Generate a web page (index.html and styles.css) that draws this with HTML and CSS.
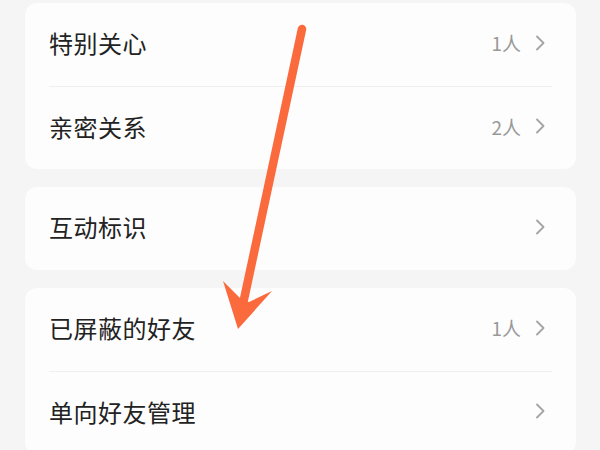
FILE: index.html
```html
<!DOCTYPE html>
<html lang="zh-CN">
<head>
  <meta charset="UTF-8" />
  <meta name="viewport" content="width=device-width, initial-scale=1.0"/>
  <title>好友设置</title>
  <link rel="stylesheet" href="styles.css">
</head>
<body>

<main class="settings">
  <section class="card">
    <div class="row">
      <span class="label">特别关心</span>
      <span class="extra"><span class="count">1人</span><svg class="chev" width="9" height="16" viewBox="0 0 9 16"><polyline points="1,1.5 7.5,8 1,14.5"/></svg></span>
    </div>
    <div class="row">
      <span class="label">亲密关系</span>
      <span class="extra"><span class="count">2人</span><svg class="chev" width="9" height="16" viewBox="0 0 9 16"><polyline points="1,1.5 7.5,8 1,14.5"/></svg></span>
    </div>
  </section>

  <section class="card">
    <div class="row">
      <span class="label">互动标识</span>
      <span class="extra"><svg class="chev" width="9" height="16" viewBox="0 0 9 16"><polyline points="1,1.5 7.5,8 1,14.5"/></svg></span>
    </div>
  </section>

  <section class="card">
    <div class="row">
      <span class="label">已屏蔽的好友</span>
      <span class="extra"><span class="count">1人</span><svg class="chev" width="9" height="16" viewBox="0 0 9 16"><polyline points="1,1.5 7.5,8 1,14.5"/></svg></span>
    </div>
    <div class="row">
      <span class="label">单向好友管理</span>
      <span class="extra"><svg class="chev" width="9" height="16" viewBox="0 0 9 16"><polyline points="1,1.5 7.5,8 1,14.5"/></svg></span>
    </div>
  </section>
</main>

<!-- annotation arrow drawn over the list -->
<svg class="arrow" width="600" height="450" viewBox="0 0 600 450">
  <line x1="302" y1="29" x2="243" y2="304" stroke="#fa6a3c" stroke-width="8.5" stroke-linecap="round"/>
  <polygon points="223,281 242,300 249,302 272,291 238,329" fill="#fa6a3c"/>
</svg>

</body>
</html>
```

FILE: styles.css
```css
body {
  margin: 0;
  background: #f5f5f5;
  font-family: "Noto Sans CJK SC", "Noto Sans", sans-serif;
  overflow: hidden;
}
.settings {
  padding: 3px 24px 0 25px;
  display: flex;
  flex-direction: column;
  gap: 18px;
}
.card {
  background: #fdfdfd;
  border-radius: 12px;
  padding: 0 24px;
}
.row {
  box-sizing: border-box;
  height: 83px;
  padding-bottom: 4px;
  display: flex;
  align-items: center;
  justify-content: space-between;
}
.row + .row { border-top: 1px solid #efefef; }
.label {
  font-size: 24px;
  color: #222;
  letter-spacing: 0.5px;
}
.extra {
  display: flex;
  align-items: center;
  gap: 15px;
  padding-right: 7px;
}
.count {
  font-size: 19px;
  color: #999;
}
.chev {
  fill: none;
  stroke: #a4a4a4;
  stroke-width: 1.8;
  stroke-linecap: round;
  stroke-linejoin: round;
}
.arrow {
  position: absolute;
  top: 0;
  left: 0;
  pointer-events: none;
}
```
